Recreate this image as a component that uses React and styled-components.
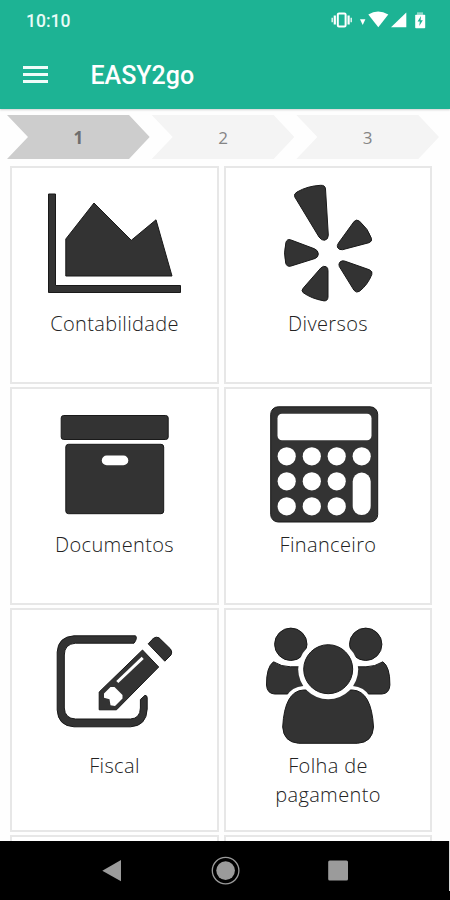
import React from "react";
import styled, { createGlobalStyle } from "styled-components";

const steps = ["1", "2", "3"];

const AreaChartIcon = () => (
  <CardIcon viewBox="44 183 141 120">
    <path d="M48.5 194H55.5V285.5H180.5V292.5H48.5Z" />
    <path d="M65.8 239L94 203L131.3 240.3L156 219.8L172 276H65.8Z" />
  </CardIcon>
);

const PetalsIcon = () => (
  <CardIcon viewBox="257.5 183 141 120">
    <path d="M294.3 197Q293 193.8 296.5 192Q307 186 320 185.3Q324.7 185 325 189L327.8 235Q327.8 239.5 324.3 240.2Q321 240.8 318.5 237Z" />
    <path d="M290 239.8L314 248.8Q317.8 250.5 317.8 254Q317.8 257.2 314.5 258.5L290 266.2Q286.2 267 285.2 263Q282.8 253 285.4 242.5Q286.5 238.7 290 239.8Z" />
    <path d="M320.3 268Q323 265.3 325.8 266.8Q327.5 267.8 327.5 270.5V297Q327.3 301 323.5 300.9Q310.5 298.5 302.5 292.5Q300.3 290.5 303 287.8Z" />
    <path d="M353.5 221.6Q356 218.8 359 221.2Q368 229 371 238.5Q371.8 241.5 368.5 242.7L342 249.7Q338.5 250.2 337 247.5Q336.2 245.5 338 243Z" />
    <path d="M344 261L369 269.8Q372.5 271.5 371.3 274.5Q367.5 284.5 359 291.3Q356 293.3 353.5 290.3L338.8 266.5Q337.7 264 339.5 262Q341.5 260.2 344 261Z" />
  </CardIcon>
);

const ArchiveIcon = () => (
  <CardIcon viewBox="44 404 141 120">
    <rect x="61.2" y="415.5" width="107" height="24" rx="2.5" />
    <path d="M68.5 444.3H161Q163.7 444.3 163.7 447V511Q163.7 513.7 161 513.7H68.5Q65.8 513.7 65.8 511V447Q65.8 444.3 68.5 444.3Z" />
    <rect className="hole" x="101.8" y="455.5" width="26.5" height="9.8" rx="4.9" />
  </CardIcon>
);

const CalculatorIcon = () => (
  <CardIcon viewBox="257.5 404 141 120">
    <rect x="270.2" y="406.8" width="107" height="115.2" rx="7.5" />
    <rect className="hole" x="277" y="413.8" width="94" height="26.4" rx="4.5" />
    {[456.3, 481.3, 506.3].map((cy, row) =>
      [286.2, 311.3, 336.2, 361.2].map((cx, col) =>
        row > 0 && col === 3 ? null : (
          <circle className="hole" key={cx} cx={cx} cy={cy} r="9.1" />
        )
      )
    )}
    <rect className="hole" x="352.2" y="472.5" width="18" height="42.6" rx="9" />
  </CardIcon>
);

const EditIcon = () => (
  <CardIcon viewBox="44 625 141 120">
    <path d="M74 635.8H135.5Q137.8 638 134 643.2H75.5Q64.3 644 64.3 655V708Q64.8 718.5 75.5 719H130.5Q140.2 718.5 140.4 708V699.5L145 695.3Q147.2 695.3 147.2 698V709Q146.5 726 130.5 726.8H74Q58 726 57.2 710V652Q58 636.8 74 635.8Z" />
    <path d="M142.5 650L158.7 667L116.5 709.8H99.2V692Z" />
    <path d="M148.2 643.8L153.5 638.3Q156 636.3 159 637.8L170.5 649Q172.7 652 171 655L164.8 661.2Z" />
    <path className="slit" d="M117.3 682L142.7 657.8" />
    <path className="hole" d="M104 693.5L110.5 687H114.5L122.5 695V698.5L115 706L110.5 705.3L109.5 699.2L104 697.8Z" />
  </CardIcon>
);

const GroupIcon = () => (
  <CardIcon viewBox="257.5 625 141 120">
    <path d="M273 661.8Q281 666.8 290 666.8H308V694H274Q266.5 693.5 266 685Q265.8 667 273 661.8Z" />
    <path d="M382.4 661.8Q374.4 666.8 365.4 666.8H347.4V694H381.4Q388.9 693.5 389.4 685Q389.6 667 382.4 661.8Z" />
    <circle cx="290.3" cy="644.3" r="16.2" />
    <circle cx="365.2" cy="644.3" r="16.2" />
    <path className="halo" d="M303 690H352Q371 691 373 727Q372 742.5 357 743.3H298Q283 742 282.2 727Q284 691 303 690Z" />
    <path d="M303 690H352Q371 691 373 727Q372 742.5 357 743.3H298Q283 742 282.2 727Q284 691 303 690Z" />
    <circle className="hole" cx="327.7" cy="669.2" r="30" />
    <circle cx="327.7" cy="669.2" r="24.5" />
  </CardIcon>
);

const categories = [
  { label: "Contabilidade", icon: AreaChartIcon },
  { label: "Diversos", icon: PetalsIcon },
  { label: "Documentos", icon: ArchiveIcon },
  { label: "Financeiro", icon: CalculatorIcon },
  { label: "Fiscal", icon: EditIcon },
  { label: "Folha de pagamento", icon: GroupIcon },
];

const StatusIcons = () => (
  <svg width="98" height="20" viewBox="330 10 98 20" fill="#fff">
    <rect x="337.8" y="13.4" width="7.8" height="13" rx="1.2" fill="none" stroke="#fff" strokeWidth="2" />
    <path d="M334.8 15.5V24.5M348.6 15.5V24.5" stroke="#fff" strokeWidth="2.2" />
    <path d="M332.2 17.7V22.3M351.2 17.7V22.3" stroke="#fff" strokeWidth="1.5" opacity="0.85" />
    <path d="M360 19.3H365.4L362.7 25Z" />
    <path d="M368.3 14.5Q378 8.5 388.3 14.5L378.3 27.2Z" />
    <path d="M406.3 12.5V27.3H391Z" />
    <path d="M417 12.3H423V14.8H417Z" opacity="0.5" />
    <rect x="415.2" y="14.8" width="10" height="13.4" rx="0.8" />
    <path d="M421 16L417.6 21.6H419.8L419.3 26L422.8 20.2H420.6Z" fill="#1db394" />
  </svg>
);

const App = () => {
  return (
    <>
      <GlobalStyle />
      <Screen>
        <Header>
          <StatusBar>
            <Clock>10:10</Clock>
            <StatusIcons />
          </StatusBar>
          <Toolbar>
            <MenuButton aria-label="Menu">
              <span />
              <span />
              <span />
            </MenuButton>
            <Title>EASY2go</Title>
          </Toolbar>
        </Header>
        <Steps>
          {steps.map((step, index) => (
            <Step key={step} $active={index === 0}>
              {step}
            </Step>
          ))}
        </Steps>
        <Grid>
          {categories.map(({ label, icon: Icon }) => (
            <Card key={label}>
              <Icon />
              <Label>{label}</Label>
            </Card>
          ))}
          <Card />
          <Card />
        </Grid>
        <NavBar>
          <svg width="450" height="59" viewBox="0 841 450 59" fill="#9b9b9b">
            <path d="M102.3 870.7L121 860V881.3Z" />
            <circle cx="225.6" cy="870.6" r="13.3" fill="none" stroke="#9b9b9b" strokeWidth="1.3" />
            <circle cx="225.6" cy="870.6" r="9.3" />
            <rect x="328.2" y="860.6" width="19.8" height="19.8" rx="1.5" />
            <rect x="449" y="841" width="1" height="50" fill="#d8d8d8" />
          </svg>
        </NavBar>
      </Screen>
    </>
  );
};

const GlobalStyle = createGlobalStyle`
  * {
    box-sizing: border-box;
  }
  body {
    margin: 0;
    background-color: #fefefe;
  }
`;

const Screen = styled.div`
  display: flex;
  flex-direction: column;
  width: 450px;
  height: 900px;
  overflow: hidden;
  background-color: #fefefe;
  font-family: "Open Sans", sans-serif;
`;

const Header = styled.header`
  flex: none;
  height: 109px;
  background-color: #1db394;
  color: #fff;
  font-family: Roboto, sans-serif;
  box-shadow: 0 1px 2px rgba(0, 0, 0, 0.18);
`;

const StatusBar = styled.div`
  display: flex;
  align-items: center;
  justify-content: space-between;
  height: 40px;
  padding: 0 22px 0 26px;
`;

const Clock = styled.span`
  margin-top: 2px;
  font-size: 17.5px;
  font-weight: 500;
  line-height: 20px;
  color: #e9fbf7;
`;

const Toolbar = styled.div`
  display: flex;
  align-items: center;
  height: 69px;
  padding-left: 23px;
`;

const MenuButton = styled.button`
  display: flex;
  flex-direction: column;
  gap: 4px;
  width: 25px;
  margin: 0 42.5px 0 0;
  padding: 0;
  border: none;
  background: none;
  span {
    height: 3px;
    background-color: #effcf9;
  }
`;

const Title = styled.h1`
  margin: 2px 0 0;
  font-size: 25px;
  font-weight: 500;
  line-height: 30px;
`;

const Steps = styled.nav`
  display: flex;
  flex: none;
  gap: 2px;
  padding: 6px 11px 7px 7px;
`;

const Step = styled.div`
  display: flex;
  align-items: center;
  justify-content: center;
  width: 143px;
  height: 44px;
  font-size: 17px;
  font-weight: ${({ $active }) => ($active ? 700 : 400)};
  color: ${({ $active }) => ($active ? "#6e6e6e" : "#858585")};
  background-color: ${({ $active }) => ($active ? "#cdcdcd" : "#f4f4f4")};
  clip-path: polygon(0 0, 122px 0, 100% 50%, 122px 100%, 0 100%, 21px 50%);
`;

const Grid = styled.main`
  display: grid;
  grid-template-columns: 209px 208px;
  grid-template-rows: 218px 218px 224px 218px;
  gap: 3px 5px;
  flex: 1;
  min-height: 0;
  overflow: hidden;
  padding-left: 10px;
`;

const Card = styled.div`
  display: flex;
  flex-direction: column;
  align-items: center;
  padding-top: 15px;
  border: 2px solid #e7e7e7;
  background-color: #fff;
`;

const CardIcon = styled.svg`
  flex: none;
  width: 141px;
  height: 120px;
  fill: #333;
  stroke: #191919;
  stroke-width: 1;
  .hole {
    fill: #fff;
    stroke: none;
  }
  .slit {
    stroke: #fff;
    stroke-width: 3;
  }
  .halo {
    fill: #fff;
    stroke: #fff;
    stroke-width: 8;
  }
`;

const Label = styled.p`
  width: 136px;
  margin: 7px 0 0;
  font-size: 20px;
  font-weight: 300;
  line-height: 28.5px;
  letter-spacing: 0.35px;
  text-align: center;
  color: #222;
`;

const NavBar = styled.footer`
  flex: none;
  height: 59px;
  background-color: #000;
  svg {
    display: block;
  }
`;

export default App;
